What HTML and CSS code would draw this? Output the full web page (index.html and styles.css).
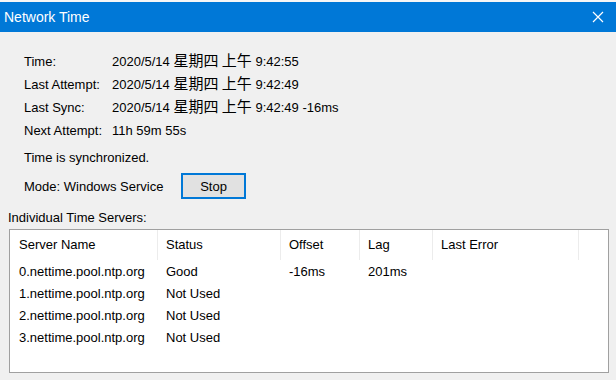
FILE: index.html
```html
<!DOCTYPE html>
<html lang="zh-CN">
<head>
    <meta charset="UTF-8">
    <title>Network Time</title>
    <link rel="stylesheet" href="styles.css">
</head>
<body>
    <div class="window">
        <div class="top-strip"></div>
        <div class="titlebar">
            <span class="title">Network Time</span>
            <svg class="close" width="12" height="12" viewBox="0 0 12 12">
                <path d="M1 1 L11 11 M11 1 L1 11" stroke="#fff" stroke-width="1.2" fill="none"/>
            </svg>
        </div>

        <div class="content">
            <div class="info">
                <span class="label">Time:</span>
                <span class="value">2020/5/14 <span class="cjk">星期四 上午</span> 9:42:55</span>
                <span class="label">Last Attempt:</span>
                <span class="value">2020/5/14 <span class="cjk">星期四 上午</span> 9:42:49</span>
                <span class="label">Last Sync:</span>
                <span class="value">2020/5/14 <span class="cjk">星期四 上午</span> 9:42:49 -16ms</span>
                <span class="label">Next Attempt:</span>
                <span class="value">11h 59m 55s</span>
            </div>

            <div class="status">Time is synchronized.</div>

            <div class="mode-row">
                <span class="mode-label">Mode: Windows Service</span>
                <button class="btn">Stop</button>
            </div>

            <div class="servers-label">Individual Time Servers:</div>

            <div class="listbox">
                <div class="list-head">
                    <div class="col first">Server Name</div>
                    <div class="col">Status</div>
                    <div class="col">Offset</div>
                    <div class="col">Lag</div>
                    <div class="col">Last Error</div>
                    <div class="col last"></div>
                </div>
                <div class="list-body">
                    <div class="row">
                        <div class="cell first">0.nettime.pool.ntp.org</div>
                        <div class="cell">Good</div>
                        <div class="cell">-16ms</div>
                        <div class="cell">201ms</div>
                        <div class="cell"></div>
                    </div>
                    <div class="row">
                        <div class="cell first">1.nettime.pool.ntp.org</div>
                        <div class="cell">Not Used</div>
                        <div class="cell"></div>
                        <div class="cell"></div>
                        <div class="cell"></div>
                    </div>
                    <div class="row">
                        <div class="cell first">2.nettime.pool.ntp.org</div>
                        <div class="cell">Not Used</div>
                        <div class="cell"></div>
                        <div class="cell"></div>
                        <div class="cell"></div>
                    </div>
                    <div class="row">
                        <div class="cell first">3.nettime.pool.ntp.org</div>
                        <div class="cell">Not Used</div>
                        <div class="cell"></div>
                        <div class="cell"></div>
                        <div class="cell"></div>
                    </div>
                </div>
            </div>
        </div>
    </div>
</body>
</html>
```

FILE: styles.css
```css
* {
    margin: 0;
    padding: 0;
    box-sizing: border-box;
}

body {
    font-family: "Liberation Sans", Arial, "Noto Sans CJK SC", sans-serif;
    font-size: 13px;
    color: #000;
    background: #f0f0f0;
    width: 616px;
    height: 380px;
    overflow: hidden;
}

.window {
    height: 380px;
    background: #f0f0f0;
}

.top-strip {
    height: 2px;
    background: #f6f6f6;
}

.titlebar {
    height: 30px;
    background: #0078d7;
    display: flex;
    align-items: center;
    justify-content: space-between;
    padding: 0 12px 0 4px;
}

.title {
    color: #fff;
    font-size: 14px;
}

.close {
    display: block;
}

.content {
    padding: 18px 0 0 0;
}

.info {
    display: grid;
    grid-template-columns: 88px auto;
    grid-auto-rows: 23px;
    line-height: 23px;
    padding-left: 24px;
}

.value {
    white-space: nowrap;
}

.cjk {
    font-family: "Noto Sans CJK SC", sans-serif;
    font-size: 15px;
    line-height: 0;
}

.status {
    margin-top: 4px;
    line-height: 23px;
    padding-left: 24px;
}

.mode-row {
    margin-top: 4px;
    display: flex;
    align-items: center;
    height: 26px;
    padding-left: 24px;
}

.mode-label {
    width: 157px;
}

.btn {
    width: 65px;
    height: 26px;
    background: #e1e1e1;
    border: 2px solid #0078d7;
    font-family: inherit;
    font-size: 13px;
    color: #000;
}

.servers-label {
    margin-top: 11px;
    line-height: 16px;
    padding-left: 8px;
}

.listbox {
    margin: 3px 0 0 9px;
    width: 600px;
    height: 144px;
    background: #fff;
    border: 1px solid #a0a0a0;
}

.list-head,
.row {
    display: grid;
    grid-template-columns: 148px 123px 79px 73px 146px 1fr;
}

.list-head {
    height: 30px;
}

.col {
    padding-left: 8px;
    line-height: 29px;
    border-right: 1px solid #ececec;
}

.col.last {
    border-right: none;
}

.list-body {
    padding-top: 1px;
}

.row {
    height: 22px;
    line-height: 22px;
}

.cell {
    padding-left: 8px;
    white-space: nowrap;
}

.first {
    padding-left: 9px;
}
```
